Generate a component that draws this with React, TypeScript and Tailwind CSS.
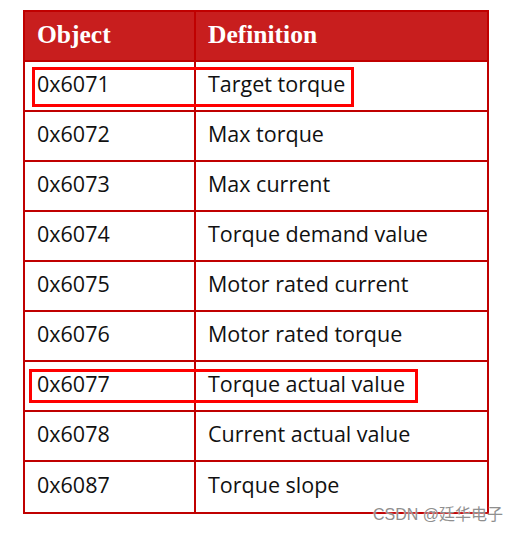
const ROWS: { obj: string; def: string; mark?: string }[] = [
  { obj: "0x6071", def: "Target torque", mark: "top-[5px] left-[7px] w-[322px] h-[40px]" },
  { obj: "0x6072", def: "Max torque" },
  { obj: "0x6073", def: "Max current" },
  { obj: "0x6074", def: "Torque demand value" },
  { obj: "0x6075", def: "Motor rated current" },
  { obj: "0x6076", def: "Motor rated torque" },
  { obj: "0x6077", def: "Torque actual value", mark: "top-[7px] left-[4px] w-[389px] h-[34px]" },
  { obj: "0x6078", def: "Current actual value" },
  { obj: "0x6087", def: "Torque slope" },
];

export default function App() {
  return (
    <div className="relative w-[525px] h-[535px] overflow-hidden bg-white pl-[23px] pt-[10px]">
      <div className="w-[466px] border-2 border-[#c00000]">
        {/* header */}
        <div
          className="flex h-[50px] bg-[#c81e1e] border-b-2 border-[#c00000] text-white font-bold text-[25.5px]"
          style={{ fontFamily: '"Liberation Serif", serif' }}
        >
          <div className="w-[171px] border-r-2 border-[#c00000] flex items-center pl-[12px] pb-[2px]">
            Object
          </div>
          <div className="flex-1 flex items-center pl-[12px] pb-[2px]">Definition</div>
        </div>

        {ROWS.map((r, i) => (
          <div
            key={r.obj}
            className={
              "relative flex h-[50px] text-[21.5px] text-[#111] " +
              (i < ROWS.length - 1 ? "border-b-2 border-[#c00000]" : "h-[48px]")
            }
            style={{ fontFamily: '"Open Sans", sans-serif' }}
          >
            <div className="w-[171px] border-r-2 border-[#c00000] flex items-center pl-[12px] pb-[4px]">
              {r.obj}
            </div>
            <div className="flex-1 flex items-center pl-[12px] pb-[4px]">{r.def}</div>
            {r.mark && (
              <div className={"absolute border-[3px] border-[#ff0000] " + r.mark} />
            )}
          </div>
        ))}
      </div>

      <p
        className="mt-[13px] pl-[8px] text-[21.5px] text-[#111] whitespace-nowrap"
        style={{ fontFamily: '"Open Sans", sans-serif' }}
      >
        the above shows the objects used in the torque mode of the drive
      </p>

      <div
        className="absolute left-[373px] top-[503px] text-[16px] text-[#8f8f8f] whitespace-nowrap"
        style={{ fontFamily: '"Liberation Sans", "Noto Sans CJK SC", sans-serif', textShadow: "0 0 2px #fff" }}
      >
        CSDN @廷华电子
      </div>
    </div>
  );
}
